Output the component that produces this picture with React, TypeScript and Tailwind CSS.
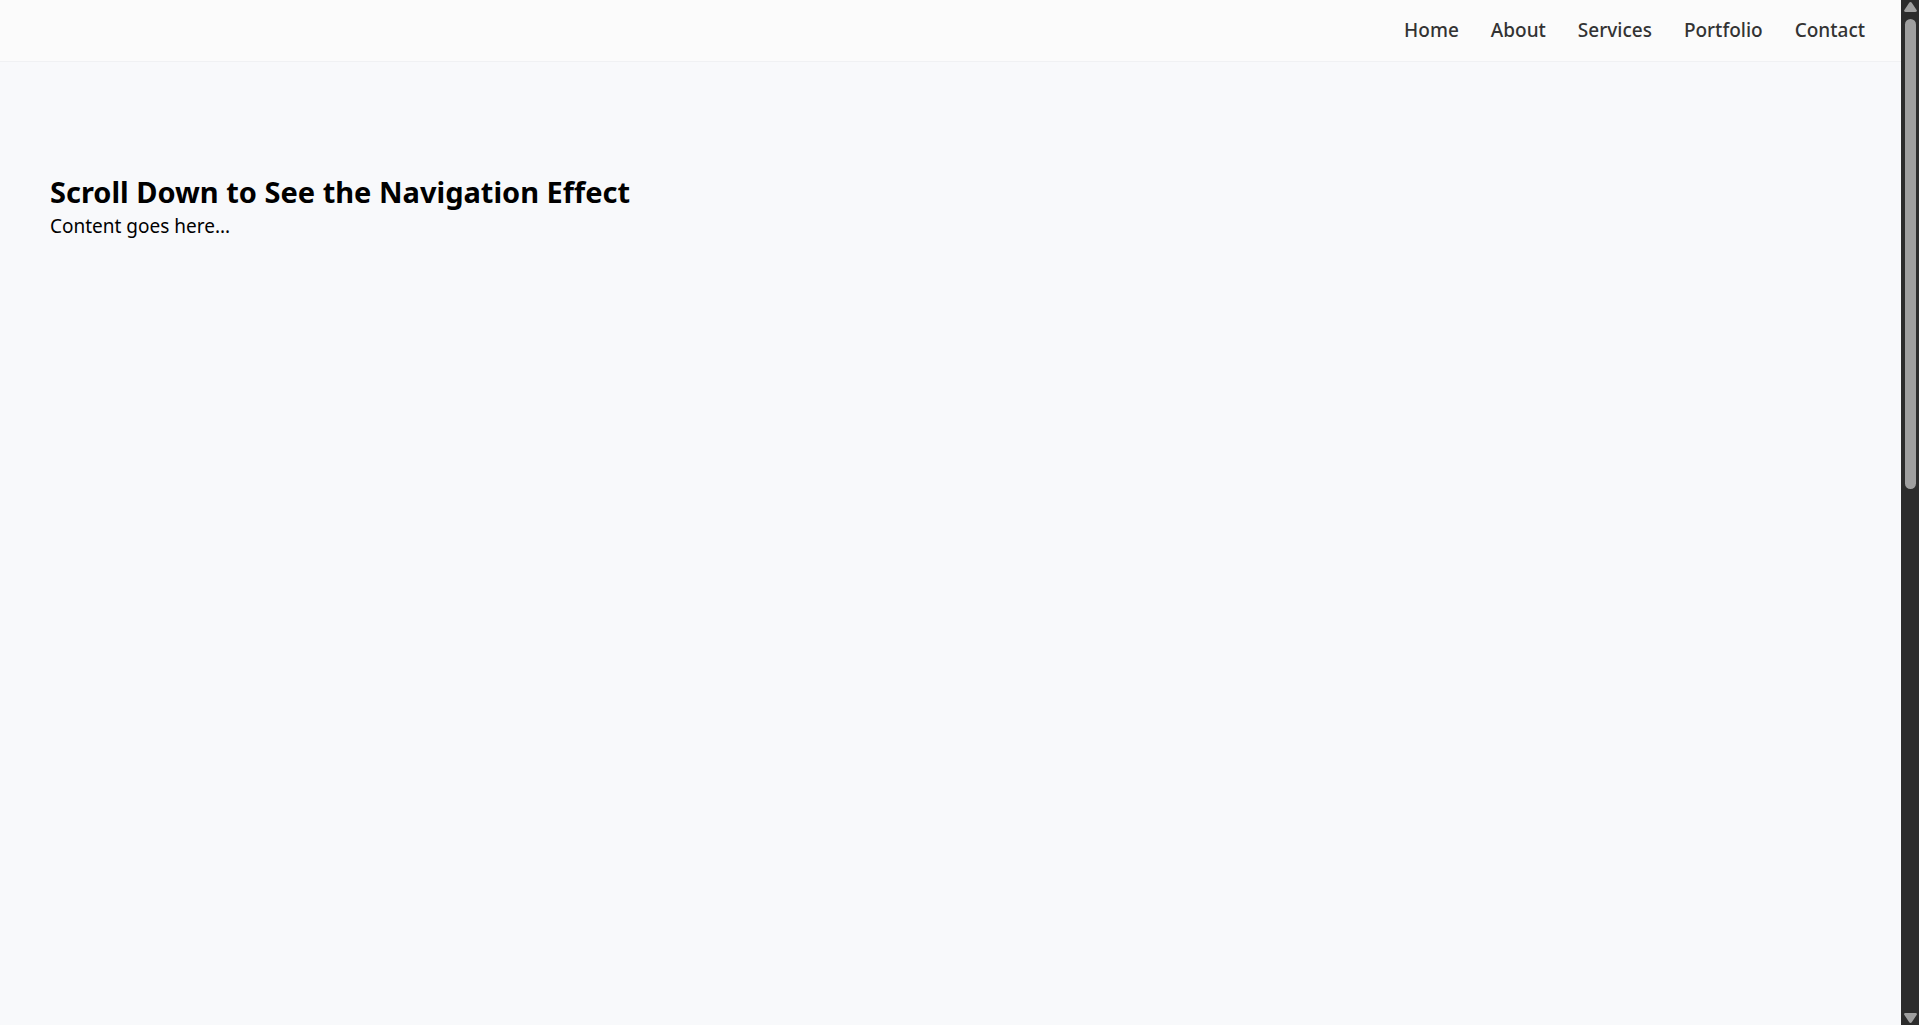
const links = ["Home", "About", "Services", "Portfolio", "Contact"];

function Arrow({ down = false }: { down?: boolean }) {
  return (
    <svg viewBox="0 0 13 10" className="h-[10px] w-[13px] fill-[#9f9f9f]" aria-hidden="true">
      <path
        d={
          down
            ? "M1.5 0h10c1.2 0 1.8 1 1.1 2L7.8 9.2c-.7 1-1.9 1-2.6 0L.4 2C-.3 1 .3 0 1.5 0Z"
            : "M1.5 10h10c1.2 0 1.8-1 1.1-2L7.8.8C7.1-.2 5.9-.2 5.2.8L.4 8c-.7 1-.1 2 1.1 2Z"
        }
      />
    </svg>
  );
}

export default function App() {
  return (
    <div className="flex h-screen bg-[#f8f9fb] font-['Noto_Sans','Open_Sans',sans-serif] text-black">
      <div className="min-w-0 flex-1">
        <header className="border-b border-[#f0f1f3] bg-[#fbfbfb] px-9 pt-4 pb-[17px]">
          <nav className="flex justify-end gap-8">
            {links.map((label) => (
              <a
                key={label}
                href={"#" + label.toLowerCase()}
                className="text-[19px] leading-7 font-medium text-[#333333]"
              >
                {label}
              </a>
            ))}
          </nav>
        </header>
        <main className="px-[50px] pt-[110px]">
          <h1 className="text-[29px] leading-10 font-bold">Scroll Down to See the Navigation Effect</h1>
          <p className="text-[19px] leading-7">Content goes here...</p>
        </main>
      </div>
      <div className="flex w-[18px] flex-col items-center bg-[#2c2c2c] py-[2px] pl-px">
        <Arrow />
        <div className="mt-[7px] h-[470px] w-[11px] rounded-full bg-[#9f9f9f]" />
        <div className="mt-auto">
          <Arrow down />
        </div>
      </div>
    </div>
  );
}
